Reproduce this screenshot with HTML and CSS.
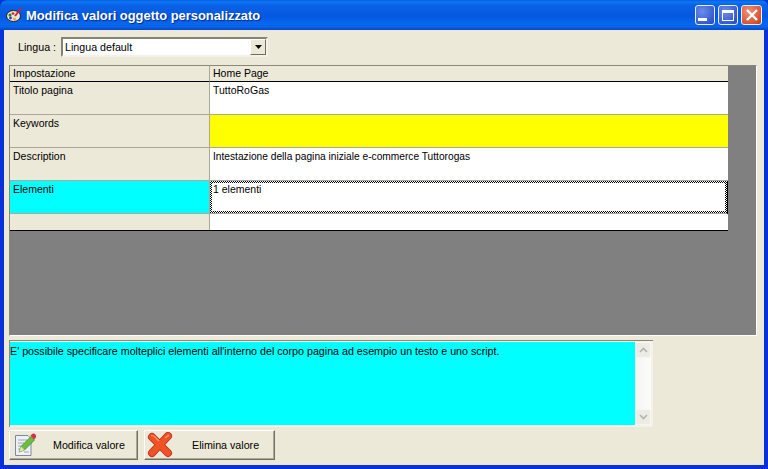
FILE: index.html
```html
<!DOCTYPE html>
<html lang="it">
<head>
<meta charset="utf-8">
<title>Modifica valori oggetto personalizzato</title>
<link rel="stylesheet" href="styles.css">
</head>
<body>
<div class="window">
  <header class="titlebar">
    <svg class="app-icon" width="16" height="16" viewBox="0 0 16 16">
      <ellipse cx="7.5" cy="9" rx="7" ry="5.5" fill="#e8e4d8" stroke="#222" stroke-width="1"/>
      <circle cx="4" cy="8" r="1.5" fill="#2a7a2a"/>
      <circle cx="7" cy="6.5" r="1.3" fill="#d02020"/>
      <circle cx="4.5" cy="11" r="1.4" fill="#2040c0"/>
      <circle cx="8.5" cy="12" r="1.3" fill="#e0a020"/>
      <path d="M9 9L15 1.5" stroke="#d02020" stroke-width="2"/>
    </svg>
    <span class="title-text">Modifica valori oggetto personalizzato</span>
    <div class="win-buttons">
      <div class="win-btn"><span class="glyph-min"></span></div>
      <div class="win-btn"><span class="glyph-max"></span></div>
      <div class="win-btn close">
        <svg width="14" height="14" viewBox="0 0 14 14"><path d="M2 2L12 12M12 2L2 12" stroke="#fff" stroke-width="2.4"/></svg>
      </div>
    </div>
  </header>
  <main class="client">
    <div class="lang-row">
      <label class="lang-label">Lingua :</label>
      <div class="combo">
        <span class="combo-value">Lingua default</span>
        <div class="combo-btn"><svg width="7" height="4" viewBox="0 0 7 4"><path d="M0 0H7L3.5 4Z" fill="#000"/></svg></div>
      </div>
    </div>
    <section class="panel">
      <div class="grid">
        <div class="cell head key">Impostazione</div>
        <div class="cell head val">Home Page</div>
        <div class="cell key">Titolo pagina</div>
        <div class="cell val">TuttoRoGas</div>
        <div class="cell key">Keywords</div>
        <div class="cell val yellow"></div>
        <div class="cell key">Description</div>
        <div class="cell val tight">Intestazione della pagina iniziale e-commerce Tuttorogas</div>
        <div class="cell key cyan">Elementi</div>
        <div class="cell val focus"><div class="focus-inner">1 elementi</div></div>
        <div class="cell key last"></div>
        <div class="cell val last"></div>
      </div>
    </section>
    <section class="help">
      <div class="help-text">E' possibile specificare molteplici elementi all'interno del corpo pagina ad esempio un testo e uno script.</div>
      <div class="scrollbar">
        <div class="scroll-btn"><svg width="9" height="6" viewBox="0 0 9 6"><path d="M1 5L4.500 1.500L8 5" fill="none" stroke="#b4b4ac" stroke-width="1.600"/></svg></div>
        <div class="scroll-btn"><svg width="9" height="6" viewBox="0 0 9 6"><path d="M1 1L4.500 4.500L8 1" fill="none" stroke="#b4b4ac" stroke-width="1.600"/></svg></div>
      </div>
    </section>
    <div class="actions">
      <button class="btn edit" type="button">
        <svg class="btn-icon" width="24" height="24" viewBox="0 0 24 24">
          <path d="M1.500 2.500H14L17 5.500V22.500H1.500Z" fill="#eef0f6" stroke="#7d88a8"/>
          <path d="M4 7H13M4 10H10M4 13H8M4 16H6M10 19H15" stroke="#9aa4bc"/>
          <path d="M5 19L7 13.500L17 3.500L20.500 7L10.500 17Z" fill="#6cbf3c" stroke="#3d8a2a" stroke-width=".8"/>
          <path d="M16.500 2.500L18.500 .8Q20 0 21.500 1.500L22 2.500Q22.500 4 21.500 5L20 6.500Z" fill="#d8304a"/>
          <path d="M5 19L7 13.500L10.500 17Z" fill="#f0e0a8"/>
        </svg>
        <span class="btn-label">Modifica valore</span>
      </button>
      <button class="btn del" type="button">
        <svg class="btn-icon" width="26" height="26" viewBox="0 0 26 26">
          <path d="M5 5L21 21M21 4L5 21" fill="none" stroke="#b8301a" stroke-width="8" stroke-linecap="round"/>
          <path d="M5 5L21 21M21 4L5 21" fill="none" stroke="#ee5226" stroke-width="6.400" stroke-linecap="round"/>
          <path d="M4 3.500L7 4L12 9M22 3L18 6" fill="none" stroke="#fb9a70" stroke-width="1.200"/>
        </svg>
        <span class="btn-label">Elimina valore</span>
      </button>
    </div>
  </main>
</div>
</body>
</html>
```
FILE: styles.css
```css
* { box-sizing: border-box; }
html, body { margin: 0; padding: 0; }
body {
  width: 768px;
  height: 469px;
  overflow: hidden;
  font-family: "Liberation Sans", Arial, sans-serif;
  font-size: 10.7px;
  color: #000;
}
.window {
  width: 768px;
  height: 469px;
  display: flex;
  flex-direction: column;
  background: #0831d9;
}
.titlebar {
  height: 30px;
  flex: none;
  display: flex;
  align-items: center;
  padding: 0 6px 0 6px;
  border-radius: 7px 7px 0 0;
  background: linear-gradient(#0a5ae0 0, #0a78f6 2px, #0a62e6 5px, #0458e0 16px, #0668ee 24px, #0a62e8 27px, #0346c8 30px);
}
.app-icon { flex: none; margin-right: 4px; }
.title-text {
  font-family: "Liberation Sans", Arial, sans-serif;
  font-weight: bold;
  font-size: 12.9px;
  color: #fff;
  text-shadow: 1px 1px 1px #0a2a90;
  white-space: nowrap;
}
.win-buttons {
  margin-left: auto;
  display: flex;
  gap: 3px;
}
.win-btn {
  width: 20px;
  height: 20px;
  border: 1px solid #e8eefc;
  border-radius: 3px;
  background: radial-gradient(circle at 35% 30%, #6a8eea, #3a5cd0 70%, #2a46b8);
  position: relative;
  display: flex;
  align-items: center;
  justify-content: center;
}
.win-btn.close {
  width: 21px;
  background: radial-gradient(circle at 35% 30%, #ee9078, #dc5a38 65%, #c03c20);
}
.glyph-min {
  width: 9px;
  height: 3px;
  background: #fff;
  align-self: flex-end;
  margin: 0 5px 3px 0;
}
.glyph-max {
  width: 12px;
  height: 11px;
  border: 1px solid #fff;
  border-top-width: 3px;
}
.client {
  flex: 1;
  margin: 0 4px 4px;
  padding: 7px 7px 0 5px;
  background: #ece9d8;
  display: flex;
  flex-direction: column;
}
.lang-row {
  display: flex;
  align-items: center;
  height: 20px;
  padding-left: 9px;
  flex: none;
}
.lang-label { width: 43px; flex: none; }
.combo {
  width: 207px;
  height: 20px;
  background: #fff;
  border: 2px solid;
  border-color: #858373 #f4f2e8 #f4f2e8 #858373;
  display: flex;
  align-items: center;
  justify-content: space-between;
  padding-left: 2px;
}
.combo-btn {
  width: 16px;
  height: 16px;
  background: #ece9d8;
  border: 1px solid;
  border-color: #fff #716f64 #716f64 #fff;
  display: flex;
  align-items: center;
  justify-content: center;
}
.panel {
  margin-top: 8px;
  height: 271px;
  flex: none;
  background: #808080;
  border: 1px solid;
  border-color: #8a8878 #fff #fff #8a8878;
}
.grid {
  width: 718px;
  display: grid;
  grid-template-columns: 200px 518px;
  grid-template-rows: 16px 33px 33px 33px 33px 16px;
  border-right: 1px solid #000;
  border-bottom: 1px solid #000;
  background: #fff;
  font-size: 10.5px;
}
.cell {
  padding: 2px 3px 0;
  border-bottom: 1px solid #aca899;
  line-height: 13px;
  white-space: nowrap;
  overflow: hidden;
}
.tight { font-size: 10.2px; }
.key {
  background: #ece9d8;
  border-right: 1px solid #aca899;
}
.val { background: #fff; }
.head { background: #ece9d8; border-bottom-color: #000; padding-top: 1px; }
.yellow { background: #ffff00; }
.cyan { background: #00ffff; }
.last { border-bottom: 0; }
.focus {
  padding: 2px;
  margin-right: 1px;
  background: repeating-conic-gradient(#000 0 25%, #fff 0 50%) 0 0 / 2px 2px;
}
.focus-inner {
  height: 100%;
  background: #fff;
  padding: 0 1px;
}
.help {
  margin-top: 4px;
  width: 644px;
  height: 87px;
  flex: none;
  display: flex;
  padding: 1px 2px 2px 0;
  background: #f4f2e8;
  border-top: 1px solid #8a8878;
  border-left: 1px solid #8a8878;
}
.help-text {
  width: 625px;
  background: #00ffff;
  padding: 3px 0 0 0;
  line-height: 13px;
}
.scrollbar {
  width: 16px;
  background: linear-gradient(90deg, #f4f4f0, #fcfcfa);
  display: flex;
  flex-direction: column;
  justify-content: space-between;
}
.scroll-btn {
  height: 16px;
  background: #ecebe4;
  border: 1px solid #f6f6f2;
  border-radius: 2px;
  display: flex;
  align-items: center;
  justify-content: center;
}
.actions {
  margin-top: 3px;
  display: flex;
  gap: 6px;
}
.btn {
  height: 30px;
  padding: 0 0 0 4px;
  display: flex;
  align-items: center;
  background: #ece9d8;
  border: 1px solid;
  border-color: #fff #716f64 #716f64 #fff;
  box-shadow: inset -1px -1px 0 #aca899;
  font: inherit;
  color: #000;
}
.btn.edit { width: 129px; }
.btn.del { width: 131px; padding-left: 2px; }
.btn-icon { flex: none; }
.btn-label { white-space: nowrap; }
.edit .btn-label { margin-left: 15px; }
.del .btn-label { margin-left: 19px; }
```
